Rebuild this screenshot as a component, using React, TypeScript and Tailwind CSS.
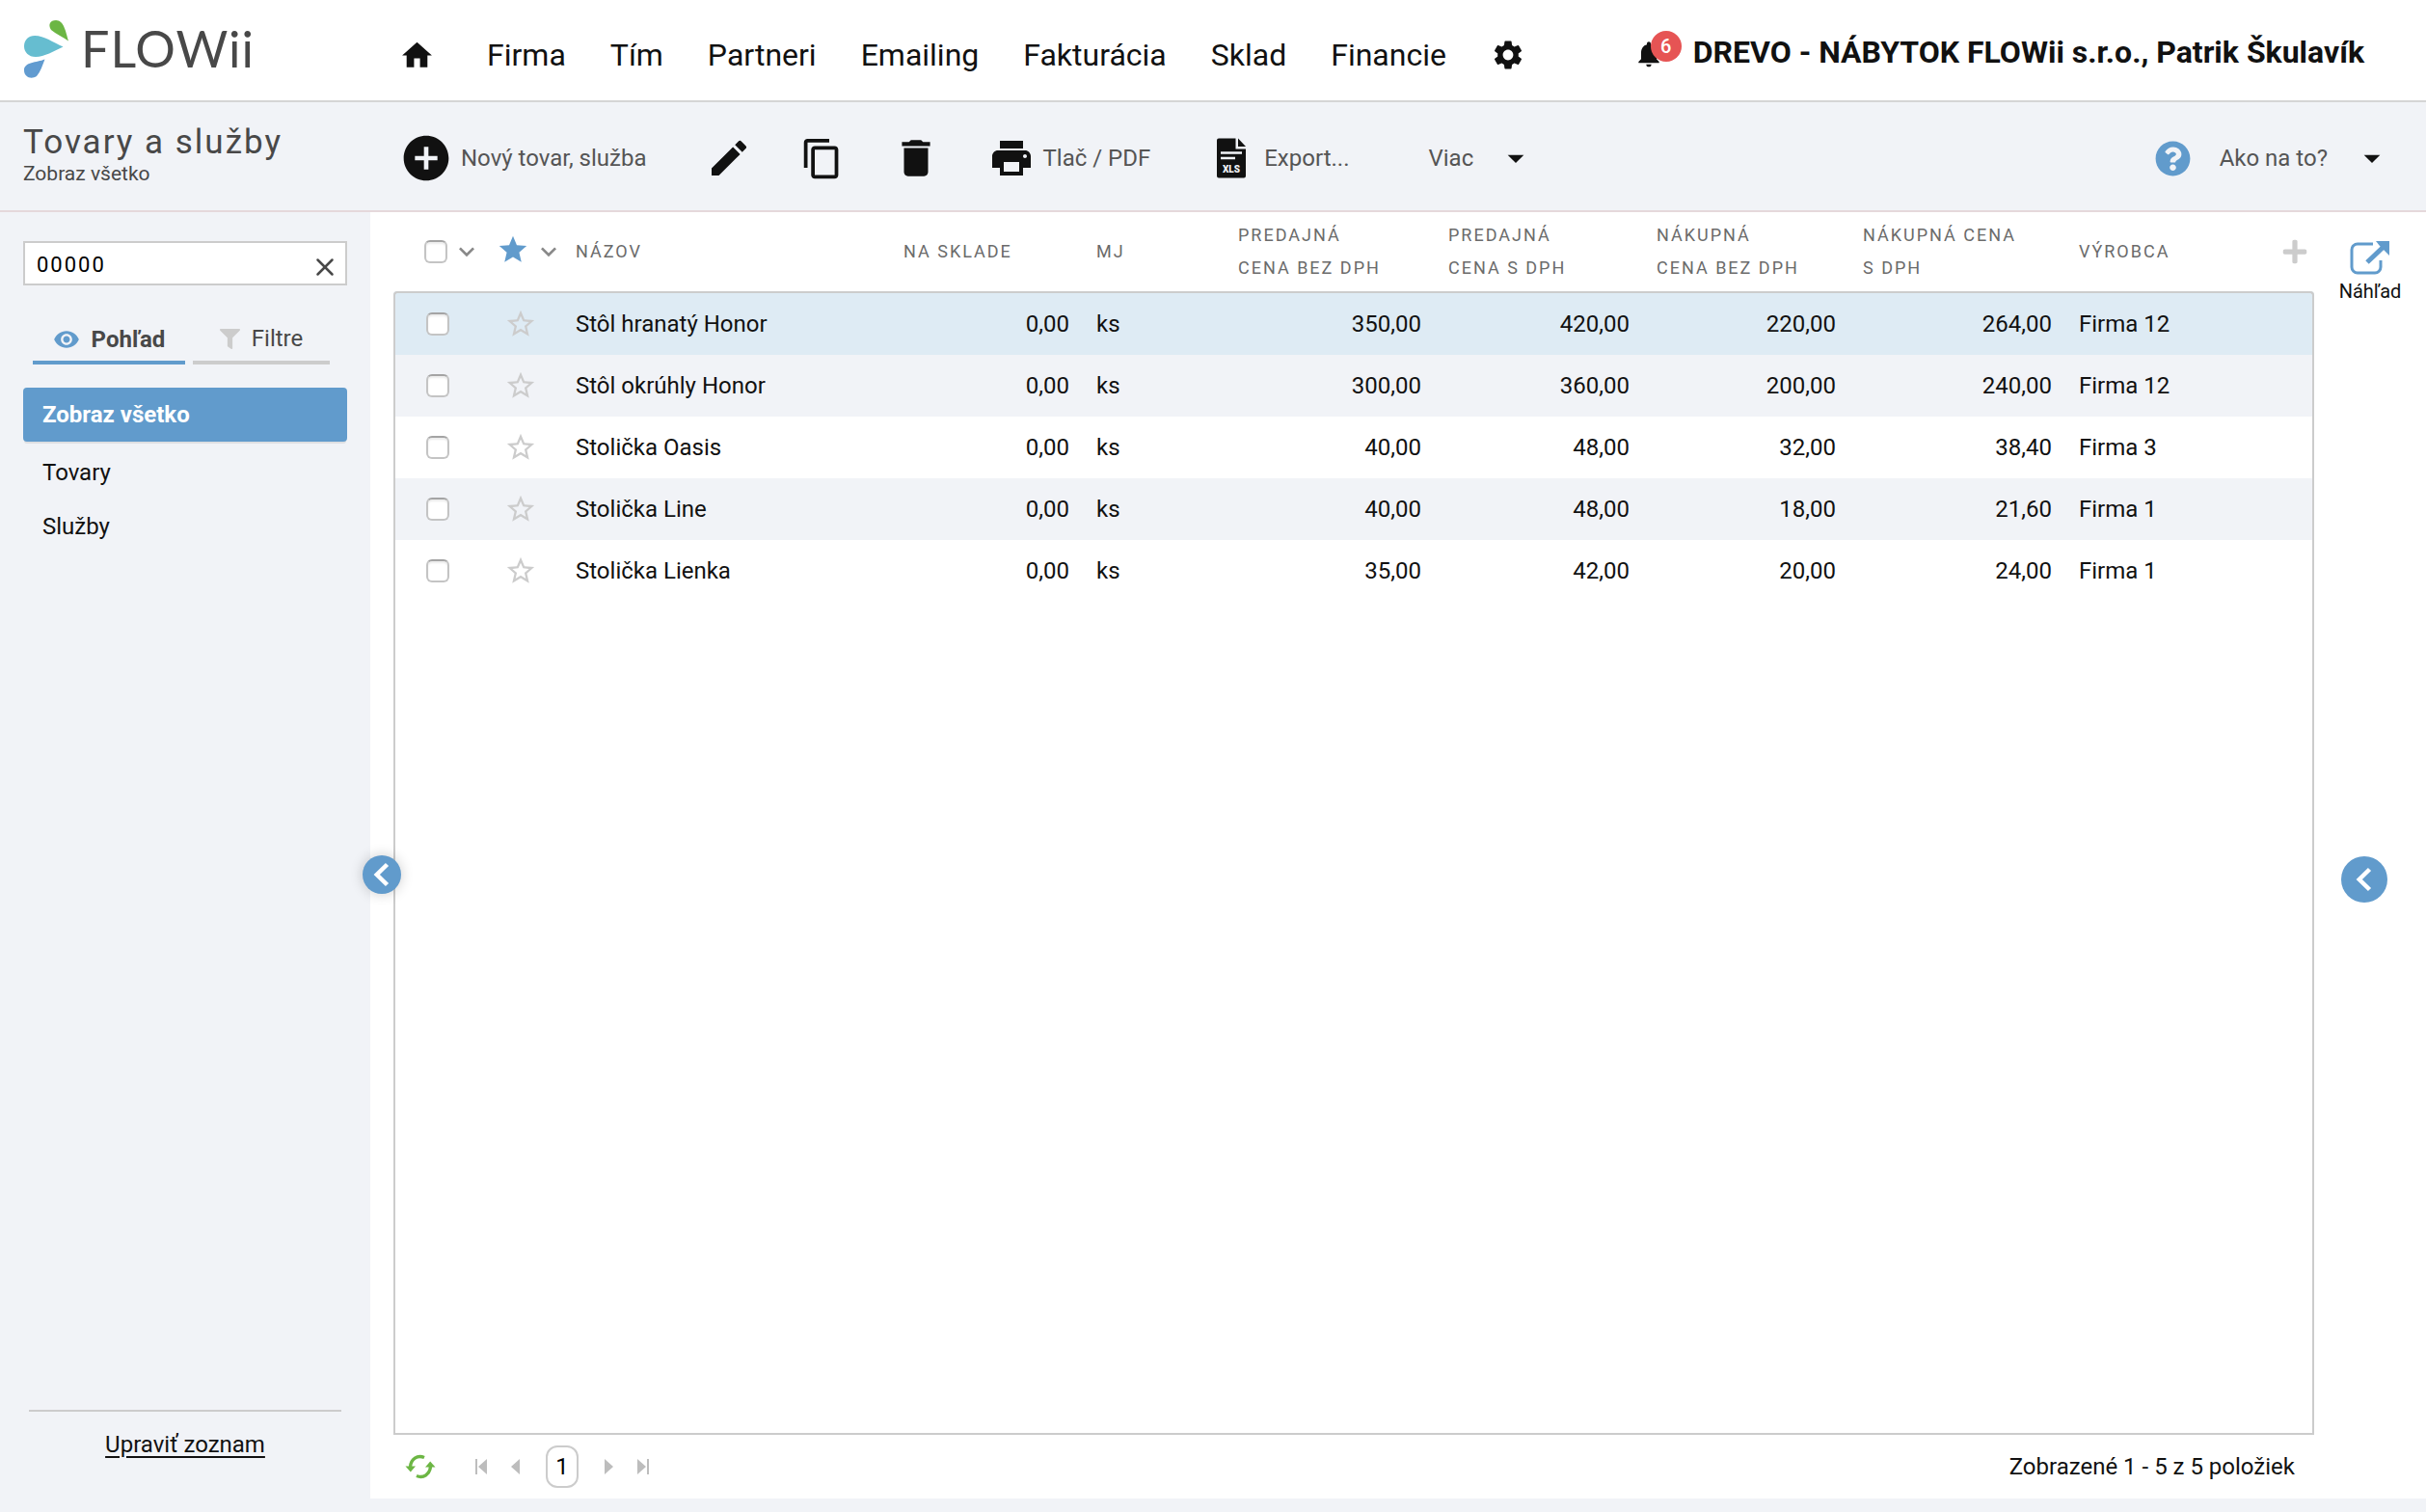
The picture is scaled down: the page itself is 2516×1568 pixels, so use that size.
import React, { useState } from 'react';
import {
  MdAddCircle,
  MdArrowDropDown,
  MdContentCopy,
  MdDelete,
  MdEdit,
  MdHome,
  MdKeyboardArrowDown,
  MdNotifications,
  MdPrint,
  MdSettings,
  MdStar,
  MdStarBorder,
  MdVisibility,
} from 'react-icons/md';
import { FaFilter, FaPlus, FaQuestionCircle } from 'react-icons/fa';
import { X } from 'lucide-react';

interface Product {
  id: number;
  name: string;
  stock: string;
  unit: string;
  saleNet: string;
  saleGross: string;
  buyNet: string;
  buyGross: string;
  maker: string;
}

const products: Product[] = [
  { id: 1, name: 'Stôl hranatý Honor', stock: '0,00', unit: 'ks', saleNet: '350,00', saleGross: '420,00', buyNet: '220,00', buyGross: '264,00', maker: 'Firma 12' },
  { id: 2, name: 'Stôl okrúhly Honor', stock: '0,00', unit: 'ks', saleNet: '300,00', saleGross: '360,00', buyNet: '200,00', buyGross: '240,00', maker: 'Firma 12' },
  { id: 3, name: 'Stolička Oasis', stock: '0,00', unit: 'ks', saleNet: '40,00', saleGross: '48,00', buyNet: '32,00', buyGross: '38,40', maker: 'Firma 3' },
  { id: 4, name: 'Stolička Line', stock: '0,00', unit: 'ks', saleNet: '40,00', saleGross: '48,00', buyNet: '18,00', buyGross: '21,60', maker: 'Firma 1' },
  { id: 5, name: 'Stolička Lienka', stock: '0,00', unit: 'ks', saleNet: '35,00', saleGross: '42,00', buyNet: '20,00', buyGross: '24,00', maker: 'Firma 1' },
];

const menu = ['Firma', 'Tím', 'Partneri', 'Emailing', 'Fakturácia', 'Sklad', 'Financie'];
const views = ['Zobraz všetko', 'Tovary', 'Služby'];

const checkboxClass =
  'block w-6 h-6 appearance-none rounded-md border-2 border-[#c4c4c4] border-t-[#a4a4a4] bg-white shadow-[inset_0_2px_2px_rgba(0,0,0,0.08)] checked:bg-[#619bcc]';

const Logo: React.FC = () => (
  <a href="#" aria-label="FLOWii" className="flex items-center pb-1">
    <svg width="48" height="62" viewBox="0 0 48 62" className="shrink-0">
      <path d="M47 23.500C41 19.500 34 16 29 12C25.500 6.500 28 2 34 2C42 2 44 13 47 23.500Z" fill="#6cb644" />
      <path d="M41.500 29.500C32 34 22 40 13 40C5.500 40 1 35 1 29C1 22.500 5.500 18 12 18C22 18 31 25 41.500 29.500Z" fill="#66bdd0" />
      <path d="M22.500 42.500C20 49 18 55.500 14 60C8 64 1 60.500 1 54C1 45 14 46 22.500 42.500Z" fill="#619bd0" />
    </svg>
    <span className="ml-3 font-['Lato'] text-[52px] leading-[56px] tracking-[1px] text-[#484848]">FLOWii</span>
  </a>
);

const XlsIcon: React.FC = () => (
  <svg width="44" height="44" viewBox="0 0 44 44">
    <path d="M9 1.500H26.500V12.500H37V40.500a2 2 0 0 1-2 2H9a2 2 0 0 1-2-2V3.500a2 2 0 0 1 2-2Z" fill="#111" />
    <path d="M29 1.500L37 10H29Z" fill="#111" />
    <path d="M11 16.500H33M11 22H26" stroke="#f1f3f7" strokeWidth="2.400" />
    <text x="22" y="37" textAnchor="middle" fontFamily="Roboto, sans-serif" fontSize="10" fontWeight="900" fill="#f1f3f7">XLS</text>
  </svg>
);

const PreviewIcon: React.FC = () => (
  <svg width="42" height="38" viewBox="0 0 42 38" fill="none" stroke="#619bcc">
    <path d="M24 5H8a6 6 0 0 0-6 6v18a6 6 0 0 0 6 6h18a6 6 0 0 0 6-6V22" strokeWidth="3" />
    <path d="M18 24L36 7" strokeWidth="5" />
    <path d="M27 2H41V17L36 12L31 7Z" fill="#619bcc" stroke="none" />
  </svg>
);

const RefreshIcon: React.FC = () => (
  <svg width="32" height="26" viewBox="0 0 32 26" fill="none" stroke="#6cb644" strokeWidth="3.400">
    <path d="M20 3.500C13 0.500 6 5 5.500 13.500" />
    <path d="M0.500 12.500H11L5.800 18.500Z" fill="#6cb644" stroke="none" />
    <path d="M12 22.500C19 25.500 26 21 26.500 12.500" />
    <path d="M21 13.500H31.500L26.200 7.500Z" fill="#6cb644" stroke="none" />
  </svg>
);

const CircleChevron: React.FC = () => (
  <svg width="40" height="40" viewBox="0 0 40 40" fill="none" stroke="#fff" strokeWidth="4.500">
    <path d="M25.500 9.500L14.800 20L25.500 30.500" />
  </svg>
);

interface PagerButtonProps {
  label: string;
  bar?: boolean;
  forward?: boolean;
}

const PagerButton: React.FC<PagerButtonProps> = ({ label, bar, forward }) => (
  <button type="button" aria-label={label}>
    <svg width="14" height="16" viewBox="0 0 14 16" fill="#bdbdbd" className={forward ? 'rotate-180' : ''}>
      {bar && <path d="M1 0H3V16H1Z" />}
      <path d="M13 0V16L4 8Z" />
    </svg>
  </button>
);

const App: React.FC = () => {
  const [search, setSearch] = useState('00000');
  const [activeView, setActiveView] = useState(views[0]);
  const [selected, setSelected] = useState<number[]>([]);

  const toggle = (id: number) => {
    setSelected(prev => (prev.includes(id) ? prev.filter(x => x !== id) : [...prev, id]));
  };

  const toggleAll = () => {
    setSelected(prev => (prev.length === products.length ? [] : products.map(p => p.id)));
  };

  return (
    <div className="min-h-screen flex flex-col bg-[#f1f3f7] pb-[14px] font-['Roboto',sans-serif] text-2xl leading-8 text-[#111]">
      <header className="flex items-center h-[106px] border-b-2 border-[#d5d5d5] bg-white">
        <div className="w-[414px] shrink-0 pl-6">
          <Logo />
        </div>
        <nav className="flex items-center gap-[46px] pt-[10px] text-[32px] leading-10">
          <a href="#" aria-label="Domov" className="mr-2"><MdHome size={37} /></a>
          {menu.map(item => (
            <a key={item} href="#">{item}</a>
          ))}
          <a href="#" aria-label="Nastavenia"><MdSettings size={36} /></a>
        </nav>
        <div className="ml-auto flex items-center pr-16 pt-1">
          <button type="button" aria-label="Upozornenia" className="relative mr-[30px] pt-1">
            <MdNotifications size={32} />
            <span className="absolute left-[18px] -top-1 w-8 h-8 rounded-full bg-[#e65454] text-white text-xl leading-8 font-medium text-center">6</span>
          </button>
          <a href="#" className="text-[32px] leading-10 font-bold">DREVO - NÁBYTOK FLOWii s.r.o., Patrik Škulavík</a>
        </div>
      </header>

      <div className="flex items-center h-[114px] border-b-2 border-[#e5d8db] text-[#555]">
        <div className="w-[414px] shrink-0 pl-6 pb-1 text-[#484848]">
          <h1 className="text-[35px] leading-10 tracking-[2px]">Tovary a služby</h1>
          <p className="text-[21px] leading-6">Zobraz všetko</p>
        </div>
        <div className="flex items-center gap-[50px] pt-1">
          <button type="button" className="flex items-center gap-2 pr-3">
            <MdAddCircle size={56} color="#111" />
            Nový tovar, služba
          </button>
          <button type="button" aria-label="Upraviť"><MdEdit size={48} color="#111" /></button>
          <button type="button" aria-label="Kopírovať"><MdContentCopy size={45} color="#111" /></button>
          <button type="button" aria-label="Vymazať"><MdDelete size={50} color="#111" /></button>
          <button type="button" className="flex items-center gap-2 pr-3">
            <MdPrint size={48} color="#111" />
            Tlač / PDF
          </button>
          <button type="button" className="flex items-center gap-3 pr-3">
            <XlsIcon />
            Export...
          </button>
          <button type="button" className="flex items-center gap-6 pl-5">
            Viac
            <MdArrowDropDown size={40} color="#111" />
          </button>
        </div>
        <button type="button" className="ml-auto flex items-center pr-9 pt-1">
          <FaQuestionCircle size={37} color="#619bcc" className="mr-[30px]" />
          Ako na to?
          <MdArrowDropDown size={40} color="#111" className="ml-[26px]" />
        </button>
      </div>

      <div className="relative flex-1 flex">
        <aside className="w-[384px] shrink-0 flex flex-col px-6 pt-[30px] pb-10">
          <div className="flex items-center h-[46px] border-2 border-[#ccc] bg-white pl-3 pr-[6px] pt-1">
            <input
              type="text"
              aria-label="Hľadať"
              value={search}
              onChange={e => setSearch(e.target.value)}
              className="flex-1 min-w-0 text-[22px] tracking-[2px] text-black outline-none"
            />
            <button type="button" aria-label="Zmazať" onClick={() => setSearch('')} className="pt-1">
              <X size={30} color="#484848" />
            </button>
          </div>

          <div className="mt-8 flex gap-2 px-[10px] text-[#484848]">
            <button type="button" className="flex items-center justify-center gap-3 w-[158px] h-[50px] border-b-4 border-[#619bcc] pt-[2px] font-bold">
              <MdVisibility size={28} color="#619bcc" />
              Pohľad
            </button>
            <button type="button" className="flex items-center justify-center gap-3 w-[142px] h-[50px] border-b-4 border-[#ccc]">
              <FaFilter size={21} color="#ccc" />
              Filtre
            </button>
          </div>

          <ul className="mt-6">
            {views.map(view => (
              <li key={view}>
                <button
                  type="button"
                  onClick={() => setActiveView(view)}
                  className={view === activeView
                    ? 'w-full h-14 mb-1 px-5 rounded bg-[#619bcc] text-left font-bold text-white shadow-[0_3px_0_-1px_#dedfe2]'
                    : 'w-full h-14 px-5 rounded text-left'}
                >
                  {view}
                </button>
              </li>
            ))}
          </ul>

          <div className="mt-auto mx-[6px] border-t-2 border-[#ccc] pt-[18px] text-center">
            <a href="#" className="underline underline-offset-4">Upraviť zoznam</a>
          </div>
        </aside>

        <main className="flex-1 min-w-0 flex flex-col bg-white pl-6">
          <table className="w-full table-fixed border-separate border-spacing-0 text-left">
            <colgroup>
              <col className="w-[101px]" />
              <col className="w-[74px]" />
              <col className="w-[340px]" />
              <col className="w-[200px]" />
              <col className="w-[147px]" />
              <col className="w-[218px]" />
              <col className="w-[216px]" />
              <col className="w-[214px]" />
              <col className="w-[224px]" />
              <col />
            </colgroup>
            <thead className="text-lg leading-[34px] tracking-[2px] text-[#6b6b6b]">
              <tr className="h-[82px]">
                <th className="p-0 pl-8">
                  <div className="flex items-center gap-1">
                    <input type="checkbox" aria-label="Označiť všetko" checked={selected.length === products.length} onChange={toggleAll} className={checkboxClass} />
                    <button type="button" aria-label="Možnosti výberu"><MdKeyboardArrowDown size={32} color="#888" /></button>
                  </div>
                </th>
                <th className="p-0 pl-[6px]">
                  <div className="flex items-center gap-1">
                    <MdStar size={34} color="#619bcc" className="shrink-0 mb-1" />
                    <button type="button" aria-label="Možnosti obľúbených"><MdKeyboardArrowDown size={32} color="#888" /></button>
                  </div>
                </th>
                <th className="px-[14px] py-0 font-normal">NÁZOV</th>
                <th className="px-[14px] py-0 font-normal">NA SKLADE</th>
                <th className="px-[14px] py-0 font-normal">MJ</th>
                <th className="px-[14px] py-0 font-normal">PREDAJNÁ<br />CENA BEZ DPH</th>
                <th className="px-[14px] py-0 font-normal">PREDAJNÁ<br />CENA S DPH</th>
                <th className="px-[14px] py-0 font-normal">NÁKUPNÁ<br />CENA BEZ DPH</th>
                <th className="px-[14px] py-0 font-normal">NÁKUPNÁ CENA<br />S DPH</th>
                <th className="pl-[14px] pr-[6px] py-0 font-normal">
                  <div className="flex items-center justify-between">
                    VÝROBCA
                    <button type="button" aria-label="Pridať stĺpec"><FaPlus size={28} color="#ccc" /></button>
                  </div>
                </th>
              </tr>
            </thead>
            <tbody>
              {products.map((p, i) => (
                <tr
                  key={p.id}
                  className={`h-16 even:bg-[#f1f3f7] ${i === 0 ? 'bg-[#deebf4] [&>td]:border-t-2 [&>td]:h-[66px] [&>td:first-child]:rounded-tl [&>td:last-child]:rounded-tr' : ''} [&>td]:border-[#ccc] [&>td]:py-0 [&>td]:px-[14px] [&>td:first-child]:border-l-2 [&>td:last-child]:border-r-2`}
                >
                  <td>
                    <div className="pl-[18px]">
                      <input type="checkbox" aria-label={p.name} checked={selected.includes(p.id)} onChange={() => toggle(p.id)} className={checkboxClass} />
                    </div>
                  </td>
                  <td>
                    <button type="button" aria-label={`Obľúbené: ${p.name}`} className="block">
                      <MdStarBorder size={34} color="#ccc" />
                    </button>
                  </td>
                  <td>{p.name}</td>
                  <td className="text-right">{p.stock}</td>
                  <td>{p.unit}</td>
                  <td className="text-right">{p.saleNet}</td>
                  <td className="text-right">{p.saleGross}</td>
                  <td className="text-right">{p.buyNet}</td>
                  <td className="text-right">{p.buyGross}</td>
                  <td>{p.maker}</td>
                </tr>
              ))}
            </tbody>
          </table>
          <div className="flex-1 border-x-2 border-b-2 border-[#ccc]" />
          <footer className="flex items-center h-[66px] pl-3 pr-5">
            <button type="button" aria-label="Obnoviť" className="mr-10"><RefreshIcon /></button>
            <div className="flex items-center gap-5">
              <PagerButton label="Prvá strana" bar />
              <PagerButton label="Predchádzajúca strana" />
              <button type="button" className="w-[34px] h-11 mx-[6px] rounded-xl border-2 border-[#ccc] text-black">1</button>
              <PagerButton label="Nasledujúca strana" forward />
              <PagerButton label="Posledná strana" bar forward />
            </div>
            <p className="ml-auto">Zobrazené 1 - 5 z 5 položiek</p>
          </footer>
        </main>

        <aside className="w-[116px] shrink-0 flex flex-col items-center bg-white pt-7">
          <button type="button" className="flex flex-col items-center text-xl leading-8">
            <PreviewIcon />
            Náhľad
          </button>
          <div className="flex-1 flex items-center pr-3 pb-12">
            <button type="button" aria-label="Otvoriť náhľad" className="flex items-center justify-center w-12 h-12 rounded-full bg-[#619bcc]">
              <CircleChevron />
            </button>
          </div>
        </aside>

        <button
          type="button"
          aria-label="Skryť panel"
          className="absolute left-[376px] top-1/2 w-10 h-10 rounded-full bg-[#619bcc] shadow-[0_0_14px_rgba(0,0,0,0.2)]"
        >
          <CircleChevron />
        </button>
      </div>
    </div>
  );
};

export default App;
